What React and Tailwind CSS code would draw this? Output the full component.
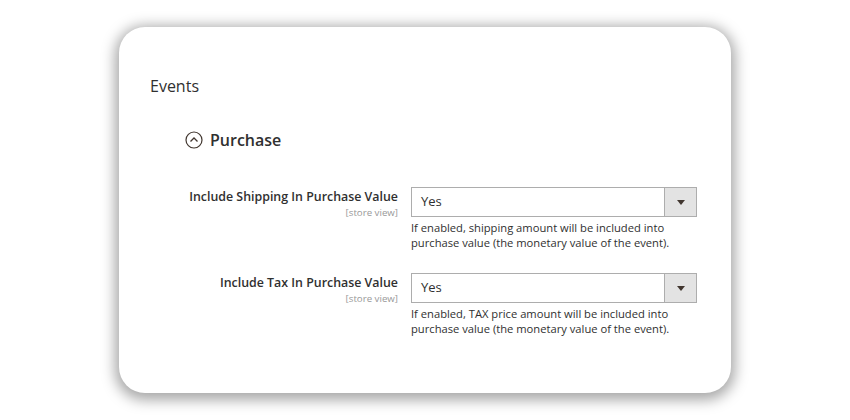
import React from "react";

function Row({ label, help1, help2 }) {
  return (
    <div className="flex items-start">
      <div className="w-[248px] flex flex-col items-end pr-[13px]">
        <div className="text-[12.4px] font-semibold text-[#303030] leading-[17px]">{label}</div>
        <div className="text-[9.7px] text-[#999] leading-[13px] mt-[1px]">[store view]</div>
      </div>
      <div className="flex flex-col">
        <div className="flex w-[286px] h-[30px] border border-[#adadad] bg-white mt-[-1px]">
          <div className="flex-1 flex items-center pl-[9px] text-[13px] text-[#303030]">Yes</div>
          <div className="w-[32px] bg-[#e3e3e3] border-l border-[#adadad] flex items-center justify-center">
            <svg width="8" height="5" viewBox="0 0 8 5"><path d="M0 0h8L4 5z" fill="#41362f" /></svg>
          </div>
        </div>
        <div className="mt-[3px] text-[11.2px] leading-[15px] text-[#303030]">
          <div>{help1}</div>
          <div>{help2}</div>
        </div>
      </div>
    </div>
  );
}

export default function App() {
  return (
    <div className="w-[850px] h-[420px] bg-white flex items-start justify-center pt-[27px]" style={{ fontFamily: '"Open Sans", sans-serif' }}>
      <div className="w-[612px] h-[366px] bg-white rounded-[26px] shadow-[0_3px_14px_4px_rgba(0,0,0,0.35)] flex flex-col pl-[31px]">
        <div className="mt-[48px] text-[16px] font-medium text-[#303030] leading-[22px]">Events</div>
        <div className="mt-[32px] ml-[35px] flex items-center gap-[7px]">
          <svg width="18" height="18" viewBox="0 0 18 18">
            <circle cx="9" cy="9" r="8" fill="none" stroke="#41362f" strokeWidth="1.2" />
            <path d="M5.5 10.5L9 7l3.5 3.5" fill="none" stroke="#41362f" strokeWidth="1.3" />
          </svg>
          <span className="text-[16px] font-semibold text-[#303030] leading-[22px]">Purchase</span>
        </div>
        <div className="mt-[37px] ml-[13px] flex flex-col gap-[24px]">
          <Row
            label="Include Shipping In Purchase Value"
            help1="If enabled, shipping amount will be included into"
            help2="purchase value (the monetary value of the event)."
          />
          <Row
            label="Include Tax In Purchase Value"
            help1="If enabled, TAX price amount will be included into"
            help2="purchase value (the monetary value of the event)."
          />
        </div>
      </div>
    </div>
  );
}
